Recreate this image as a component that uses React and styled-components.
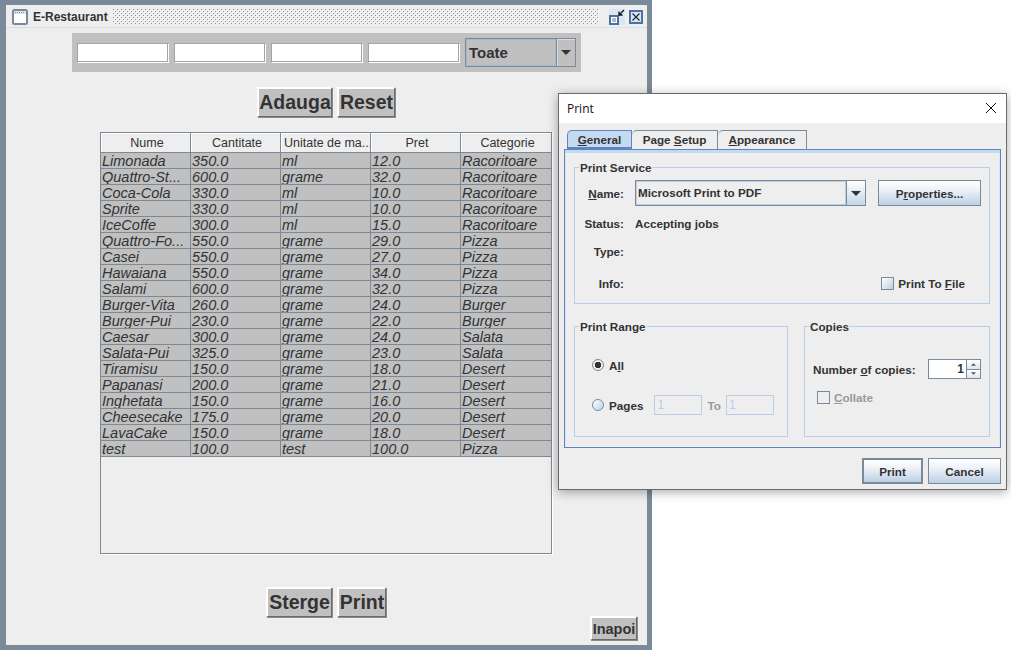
import styled, { createGlobalStyle } from "styled-components";

const GlobalStyle = createGlobalStyle`
  html, body {
    margin: 0;
    padding: 0;
    background: #ffffff;
  }
  body {
    font-family: "Liberation Sans", Arial, sans-serif;
    color: #333333;
  }
  * {
    box-sizing: border-box;
  }
`;

const Page = styled.div`
  position: relative;
  width: 1011px;
  height: 657px;
  overflow: hidden;
`;

/* main window */
const Frame = styled.div`
  display: flex;
  flex-direction: column;
  width: 652px;
  height: 650px;
  border: solid #7a8a99;
  border-width: 5px 5px 5px 6px;
  background: #eeeeee;
`;

const TitleBar = styled.div`
  display: flex;
  align-items: center;
  flex: none;
  height: 23px;
  padding: 1px 4px 0 6px;
  gap: 5px;
  border-bottom: 1px solid #d5dfea;
`;

const TitleText = styled.span`
  font-size: 12px;
  font-weight: 700;
  color: #333333;
`;

const Bumps = styled.div`
  flex: 1;
  height: 15px;
  background-color: #eeeeee;
  background-image:
    radial-gradient(circle at 0.5px 0.5px, #8b9096 0.7px, transparent 0.7px),
    radial-gradient(circle at 0.5px 0.5px, #8b9096 0.7px, transparent 0.7px),
    radial-gradient(circle at 0.5px 0.5px, #ffffff 0.7px, transparent 0.7px),
    radial-gradient(circle at 0.5px 0.5px, #ffffff 0.7px, transparent 0.7px);
  background-size: 4px 4px;
  background-position: 0 0, 2px 2px, 1px 1px, 3px 3px;
`;

const WinButtons = styled.div`
  display: flex;
  align-items: center;
  gap: 4px;
  margin-left: 5px;
`;

const Body = styled.div`
  flex: 1;
  display: flex;
  flex-direction: column;
  min-height: 0;
`;

const FilterBar = styled.div`
  display: flex;
  align-items: center;
  align-self: flex-start;
  width: 509px;
  height: 39px;
  margin: 5px 0 0 66px;
  padding: 0 5px;
  gap: 6px;
  background: #c0c0c0;
`;

const FilterInput = styled.input`
  width: 91px;
  height: 19px;
  padding: 0;
  background: #ffffff;
  border: 1px solid #a3a3a3;
  box-shadow: 1px 1px 0 #ffffff;
`;

const ComboBox = styled.div`
  display: flex;
  width: 111px;
  height: 29px;
  border: 1px solid #7a8a99;
  background: #c0c0c0;
`;

const ComboValue = styled.div`
  flex: 1;
  display: flex;
  align-items: center;
  padding-left: 2px;
  font-size: 15px;
  font-weight: 700;
  color: #333333;
  border: 1px solid #a3b8cc;
`;

const ComboArrow = styled.div`
  width: 19px;
  display: flex;
  align-items: center;
  justify-content: center;
  border-left: 1px solid #7a8a99;
  box-shadow: inset 1px 1px 0 #dddddd;
`;

const ButtonRow = styled.div`
  display: flex;
  justify-content: center;
  gap: 5px;
  margin-top: ${(p) => p.$top}px;
  padding-right: 1px;
`;

const RaisedButton = styled.button`
  height: ${(p) => (p.$small ? 24 : 30)}px;
  padding: 0;
  width: ${(p) => p.$w}px;
  font-family: "Liberation Sans", Arial, sans-serif;
  font-size: ${(p) => (p.$small ? 14.5 : 19.5)}px;
  font-weight: 700;
  color: #333333;
  background: #c0c0c0;
  border: solid;
  border-color: #ffffff #6a6a6a #6a6a6a #ffffff;
  border-width: 2px 1px 1px 2px;
  box-shadow: 1px 1px 0 #8a8a8a;
`;

const TableWrap = styled.div`
  align-self: flex-start;
  width: 452px;
  height: 422px;
  margin: 15px 0 0 94px;
  border: 1px solid #7a8a99;
  box-shadow: 1px 1px 0 #ffffff;
  background: #eeeeee;
`;

const Table = styled.table`
  width: 450px;
  table-layout: fixed;
  border-collapse: separate;
  border-spacing: 0;
`;

const HeadCell = styled.th`
  height: 20px;
  padding: 0 0 0 3px;
  font-size: 12.5px;
  font-weight: 400;
  color: #333333;
  text-align: center;
  white-space: nowrap;
  overflow: hidden;
  background: #eeeeee;
  border-right: 1px solid #7a8a99;
  border-bottom: 1px solid #7a8a99;
  box-shadow: inset 1px 1px 0 #ffffff;
  &:last-child {
    border-right: none;
  }
`;

const Cell = styled.td`
  height: 16px;
  padding: 0 1px;
  overflow: hidden;
  background: #c0c0c0;
  border-right: 1px solid #7a8a99;
  border-bottom: 1px solid #7a8a99;
  &:last-child {
    border-right: none;
  }
`;

const CellText = styled.span`
  display: block;
  height: 15px;
  font-size: 14.5px;
  line-height: 17px;
  font-style: italic;
  color: #333333;
  white-space: nowrap;
`;

const BackRow = styled.div`
  display: flex;
  justify-content: flex-end;
  margin-top: -1px;
  padding-right: 10px;
`;

/* print dialog, a second window lying over the first */
const Dialog = styled.div`
  position: absolute;
  left: 558px;
  top: 93px;
  width: 449px;
  height: 397px;
  display: flex;
  flex-direction: column;
  background: #eeeeee;
  border: 1px solid #6b6b6b;
  box-shadow: 0 2px 10px rgba(0, 0, 0, 0.35);
`;

const DialogTitleBar = styled.div`
  flex: none;
  height: 29px;
  display: flex;
  align-items: center;
  justify-content: space-between;
  padding: 0 9px 1px 8px;
  background: #ffffff;
`;

const DialogTitle = styled.span`
  font-family: "Open Sans", "Noto Sans", sans-serif;
  font-size: 12px;
  color: #111111;
`;

const DialogBody = styled.div`
  flex: 1;
  display: flex;
  flex-direction: column;
  padding: 7px 5px 0 5px;
`;

const Tabs = styled.div`
  display: flex;
  height: 19px;
  padding-left: 3px;
`;

const Tab = styled.div`
  display: flex;
  align-items: center;
  justify-content: center;
  width: ${(p) => p.$w}px;
  padding-bottom: 2px;
  font-size: 11.7px;
  font-weight: 700;
  color: #333333;
  background: ${(p) => (p.$active ? "#c4daf0" : "#eeeeee")};
  border: 1px solid #7a8a99;
  border-bottom: none;
  border-left-width: ${(p) => (p.$active ? 1 : 0)}px;
  border-color: ${(p) => (p.$active ? "#6382bf" : "#7a8a99")};
  border-top-left-radius: 5px;
  box-shadow: ${(p) => (p.$active ? "inset 0 -2px 0 #6382bf" : "none")};
`;

const TabPanel = styled.div`
  height: 299px;
  padding: 10px 10px 0 9px;
  border: 1px solid #6382bf;
  box-shadow: inset 0 3px 0 #c4daf0, inset 1px 0 0 #dce6f2, inset -1px 0 0 #dce6f2;
  display: flex;
  flex-direction: column;
  gap: 15px;
`;

const Group = styled.fieldset`
  margin: 0;
  padding: 0;
  min-width: 0;
  width: ${(p) => p.$w}px;
  height: ${(p) => p.$h}px;
  border: 1px solid #b8cfe5;
`;

const Legend = styled.legend`
  margin-left: 4px;
  padding: 1px 1px 0;
  font-size: 11.7px;
  font-weight: 700;
  line-height: 14px;
  color: #333333;
`;

const ServiceGrid = styled.div`
  display: grid;
  grid-template-columns: 49px 1fr;
  grid-template-rows: 26px 28px 28px 36px;
  column-gap: 11px;
  margin-top: 5px;
  font-size: 11.7px;
  font-weight: 700;
  color: #333333;
  align-items: center;
`;

const RowLabel = styled.div`
  text-align: right;
  padding-top: ${(p) => p.$pad || 0}px;
`;

const RowValue = styled.div`
  display: flex;
  align-items: center;
  justify-content: ${(p) => p.$justify || "flex-start"};
  padding-top: ${(p) => p.$pad || 0}px;
  padding-right: ${(p) => p.$right || 0}px;
`;

const NameCombo = styled.div`
  display: flex;
  width: 231px;
  height: 26px;
  border: 1px solid #7a8a99;
`;

const NameValue = styled.div`
  flex: 1;
  display: flex;
  align-items: center;
  padding: 0 0 2px 1px;
  border: 1px solid #b8cfe5;
`;

const NameArrow = styled.div`
  width: 19px;
  display: flex;
  align-items: center;
  justify-content: center;
  border-left: 1px solid #7a8a99;
  background: linear-gradient(#ffffff, #c4d6e8);
`;

const GradientButton = styled.button`
  width: ${(p) => p.$w}px;
  height: 26px;
  padding: 0;
  font-family: "Liberation Sans", Arial, sans-serif;
  font-size: 11.7px;
  font-weight: 700;
  color: #333333;
  border: ${(p) => (p.$default ? 2 : 1)}px solid #7a8a99;
  background: linear-gradient(#ffffff, #eef3f8 35%, #bcd0e5);
`;

const CheckLine = styled.label`
  display: flex;
  align-items: center;
  gap: 4px;
  color: ${(p) => (p.$off ? "#999999" : "#333333")};
`;

const CheckBox = styled.span`
  width: 13px;
  height: 13px;
  display: block;
  border: 1px solid #7a8a99;
  background: ${(p) => (p.$off ? "#eeeeee" : "linear-gradient(135deg, #ffffff, #bcd0e5)")};
`;

const LowerGroups = styled.div`
  display: flex;
  gap: 16px;
`;

const RangeBody = styled.div`
  display: flex;
  flex-direction: column;
  gap: 20px;
  padding: 21px 0 0 17px;
  font-size: 11.7px;
  font-weight: 700;
`;

const RadioLine = styled.div`
  display: flex;
  align-items: center;
  gap: 5px;
  height: 20px;
`;

const PagesLabel = styled.span`
  margin-right: 6px;
`;

const RadioDot = styled.span`
  width: 12px;
  height: 12px;
  border-radius: 50%;
  border: 1px solid #7a8a99;
  background: ${(p) =>
    p.$on
      ? "radial-gradient(circle, #333333 0 3px, #eeeeee 3.5px)"
      : "linear-gradient(135deg, #ffffff, #bcd0e5)"};
`;

const PageInput = styled.input`
  width: 48px;
  height: 20px;
  padding: 0 2px;
  font-size: 12px;
  font-family: "Liberation Sans", Arial, sans-serif;
  color: #b8cfe5;
  background: #eeeeee;
  border: 1px solid #b8cfe5;
`;

const ToLabel = styled.span`
  color: #999999;
`;

const CopiesBody = styled.div`
  display: flex;
  flex-direction: column;
  gap: 12px;
  padding: 25px 8px 0 8px;
  font-size: 11.7px;
  font-weight: 700;
`;

const CopiesLine = styled.div`
  display: flex;
  align-items: center;
  justify-content: space-between;
`;

const Spinner = styled.div`
  display: flex;
  width: 53px;
  height: 20px;
`;

const SpinValue = styled.div`
  flex: 1;
  text-align: right;
  padding-right: 2px;
  font-size: 12px;
  line-height: 18px;
  background: #ffffff;
  border: 1px solid #7a8a99;
  border-right: none;
`;

const SpinArrows = styled.div`
  width: 15px;
  display: flex;
  flex-direction: column;
  border: 1px solid #7a8a99;
`;

const SpinArrow = styled.div`
  flex: 1;
  display: flex;
  align-items: center;
  justify-content: center;
  background: linear-gradient(#ffffff, #dce6f2);
  & + & {
    border-top: 1px solid #7a8a99;
  }
`;

const CollateLine = styled(CheckLine)`
  padding-left: 4px;
`;

const DialogFooter = styled.div`
  display: flex;
  justify-content: flex-end;
  gap: 5px;
  margin-top: 10px;
`;

const columns = ["Nume", "Cantitate", "Unitate de ma...", "Pret", "Categorie"];

const products = [
  ["Limonada", "350.0", "ml", "12.0", "Racoritoare"],
  ["Quattro-St...", "600.0", "grame", "32.0", "Racoritoare"],
  ["Coca-Cola", "330.0", "ml", "10.0", "Racoritoare"],
  ["Sprite", "330.0", "ml", "10.0", "Racoritoare"],
  ["IceCoffe", "300.0", "ml", "15.0", "Racoritoare"],
  ["Quattro-Fo...", "550.0", "grame", "29.0", "Pizza"],
  ["Casei", "550.0", "grame", "27.0", "Pizza"],
  ["Hawaiana", "550.0", "grame", "34.0", "Pizza"],
  ["Salami", "600.0", "grame", "32.0", "Pizza"],
  ["Burger-Vita", "260.0", "grame", "24.0", "Burger"],
  ["Burger-Pui", "230.0", "grame", "22.0", "Burger"],
  ["Caesar", "300.0", "grame", "24.0", "Salata"],
  ["Salata-Pui", "325.0", "grame", "23.0", "Salata"],
  ["Tiramisu", "150.0", "grame", "18.0", "Desert"],
  ["Papanasi", "200.0", "grame", "21.0", "Desert"],
  ["Inghetata", "150.0", "grame", "16.0", "Desert"],
  ["Cheesecake", "175.0", "grame", "20.0", "Desert"],
  ["LavaCake", "150.0", "grame", "18.0", "Desert"],
  ["test", "100.0", "test", "100.0", "Pizza"],
];

function WindowIcon() {
  return (
    <svg width="16" height="16" viewBox="0 0 16 16">
      <rect x="1" y="1" width="14" height="14" rx="1.5" fill="#ffffff" stroke="#7a8a99" strokeWidth="2" />
      <rect x="2" y="2" width="12" height="3" fill="#dce6f2" />
      <path d="M3 3.5h1M5 3.5h1M7 3.5h1M9 3.5h1M11 3.5h1" stroke="#7a8a99" />
    </svg>
  );
}

function IconifyIcon() {
  return (
    <svg width="16" height="16" viewBox="0 0 16 16">
      <rect width="16" height="16" fill="#dce6f2" />
      <rect x="1" y="7" width="8" height="8" fill="#ffffff" stroke="#4f6f9f" strokeWidth="2" />
      <rect x="3" y="9" width="4" height="4" fill="#a8bcd4" />
      <path d="M15 1 10.5 5.5M10 2.5V6h3.5" fill="none" stroke="#111111" strokeWidth="1.3" />
    </svg>
  );
}

function CloseIcon() {
  return (
    <svg width="14" height="14" viewBox="0 0 14 14">
      <rect x="1" y="1" width="12" height="12" fill="#dce6f2" stroke="#4f6f9f" strokeWidth="2" />
      <path d="M3.5 3.5l7 7M10.5 3.5l-7 7" stroke="#1a2a3a" strokeWidth="1.2" />
    </svg>
  );
}

function DownArrow({ w = 10, color = "#333333" }) {
  return (
    <svg width={w} height={Math.ceil(w / 2)} viewBox="0 0 10 5">
      <path d="M0 0h10L5 5z" fill={color} />
    </svg>
  );
}

function UpArrow() {
  return (
    <svg width="5" height="3" viewBox="0 0 10 5">
      <path d="M0 5h10L5 0z" fill="#555555" />
    </svg>
  );
}

function DialogClose() {
  return (
    <svg width="12" height="12" viewBox="0 0 12 12">
      <path d="M1 1l10 10M11 1 1 11" stroke="#111111" strokeWidth="1" />
    </svg>
  );
}

export default function App() {
  return (
    <Page>
      <GlobalStyle />
      <Frame>
        <TitleBar>
          <WindowIcon />
          <TitleText>E-Restaurant</TitleText>
          <Bumps />
          <WinButtons>
            <IconifyIcon />
            <CloseIcon />
          </WinButtons>
        </TitleBar>
        <Body>
          <FilterBar>
            <FilterInput />
            <FilterInput />
            <FilterInput />
            <FilterInput />
            <ComboBox>
              <ComboValue>Toate</ComboValue>
              <ComboArrow>
                <DownArrow />
              </ComboArrow>
            </ComboBox>
          </FilterBar>
          <ButtonRow $top={15}>
            <RaisedButton $w={75}>Adauga</RaisedButton>
            <RaisedButton $w={58}>Reset</RaisedButton>
          </ButtonRow>
          <TableWrap>
            <Table>
              <thead>
                <tr>
                  {columns.map((c) => (
                    <HeadCell key={c}>{c}</HeadCell>
                  ))}
                </tr>
              </thead>
              <tbody>
                {products.map((row, i) => (
                  <tr key={i}>
                    {row.map((v, j) => (
                      <Cell key={j}>
                        <CellText>{v}</CellText>
                      </Cell>
                    ))}
                  </tr>
                ))}
              </tbody>
            </Table>
          </TableWrap>
          <ButtonRow $top={33}>
            <RaisedButton $w={66}>Sterge</RaisedButton>
            <RaisedButton $w={49}>Print</RaisedButton>
          </ButtonRow>
          <BackRow>
            <RaisedButton $small $w={47}>Inapoi</RaisedButton>
          </BackRow>
        </Body>
      </Frame>

      <Dialog>
        <DialogTitleBar>
          <DialogTitle>Print</DialogTitle>
          <DialogClose />
        </DialogTitleBar>
        <DialogBody>
          <Tabs>
            <Tab $active $w={65}><span><u>G</u>eneral</span></Tab>
            <Tab $w={86}><span>Page <u>S</u>etup</span></Tab>
            <Tab $w={89}><span><u>A</u>ppearance</span></Tab>
          </Tabs>
          <TabPanel>
            <Group $w={416} $h={144}>
              <Legend>Print Service</Legend>
              <ServiceGrid>
                <RowLabel><u>N</u>ame:</RowLabel>
                <RowValue $justify="space-between" $right={8}>
                  <NameCombo>
                    <NameValue>Microsoft Print to PDF</NameValue>
                    <NameArrow>
                      <DownArrow />
                    </NameArrow>
                  </NameCombo>
                  <GradientButton $w={103}>P<u>r</u>operties...</GradientButton>
                </RowValue>
                <RowLabel $pad={6}>Status:</RowLabel>
                <RowValue $pad={6}>Accepting jobs</RowValue>
                <RowLabel $pad={6}>Type:</RowLabel>
                <RowValue />
                <RowLabel $pad={6}>Info:</RowLabel>
                <RowValue $pad={6} $justify="flex-end" $right={24}>
                  <CheckLine>
                    <CheckBox />
                    <span>Print To <u>F</u>ile</span>
                  </CheckLine>
                </RowValue>
              </ServiceGrid>
            </Group>
            <LowerGroups>
              <Group $w={214} $h={118}>
                <Legend>Print Range</Legend>
                <RangeBody>
                  <RadioLine>
                    <RadioDot $on />
                    <span>A<u>l</u>l</span>
                  </RadioLine>
                  <RadioLine>
                    <RadioDot />
                    <PagesLabel>Pa<u>g</u>es</PagesLabel>
                    <PageInput defaultValue="1" />
                    <ToLabel>To</ToLabel>
                    <PageInput defaultValue="1" />
                  </RadioLine>
                </RangeBody>
              </Group>
              <Group $w={186} $h={118}>
                <Legend>Copies</Legend>
                <CopiesBody>
                  <CopiesLine>
                    <span>Number <u>o</u>f copies:</span>
                    <Spinner>
                      <SpinValue>1</SpinValue>
                      <SpinArrows>
                        <SpinArrow><UpArrow /></SpinArrow>
                        <SpinArrow><DownArrow w={5} color="#555555" /></SpinArrow>
                      </SpinArrows>
                    </Spinner>
                  </CopiesLine>
                  <CollateLine $off>
                    <CheckBox $off />
                    <span><u>C</u>ollate</span>
                  </CollateLine>
                </CopiesBody>
              </Group>
            </LowerGroups>
          </TabPanel>
          <DialogFooter>
            <GradientButton $default $w={61}>Print</GradientButton>
            <GradientButton $w={73}>Cancel</GradientButton>
          </DialogFooter>
        </DialogBody>
      </Dialog>
    </Page>
  );
}
